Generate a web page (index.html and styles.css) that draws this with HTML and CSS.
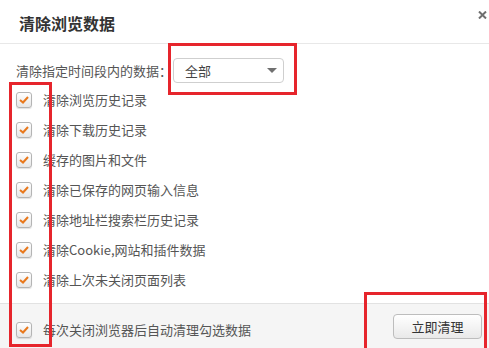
FILE: index.html
```html
<!DOCTYPE html>
<html lang="zh-CN">
<head>
<meta charset="utf-8">
<link rel="stylesheet" href="styles.css">
</head>
<body>
<div class="dialog">
  <div class="header">
    <span class="title">清除浏览数据</span>
    <svg class="close" width="9" height="8" viewBox="0 0 9 8"><path d="M1 0.5 L8 7.5 M8 0.5 L1 7.5" stroke="#6f6f6f" stroke-width="2"/></svg>
  </div>
  <div class="content">
    <div class="range">
      <span class="range-label">清除指定时间段内的数据：</span>
      <div class="select"><span>全部</span><span class="arrow"></span></div>
    </div>
    <ul class="list">
      <li class="item"><span class="cb"><svg width="10" height="8" viewBox="0 0 10 8"><path d="M1 4 L4 6.5 L9 1" fill="none" stroke="#e8781c" stroke-width="2"/></svg></span>清除浏览历史记录</li>
      <li class="item"><span class="cb"><svg width="10" height="8" viewBox="0 0 10 8"><path d="M1 4 L4 6.5 L9 1" fill="none" stroke="#e8781c" stroke-width="2"/></svg></span>清除下载历史记录</li>
      <li class="item"><span class="cb"><svg width="10" height="8" viewBox="0 0 10 8"><path d="M1 4 L4 6.5 L9 1" fill="none" stroke="#e8781c" stroke-width="2"/></svg></span>缓存的图片和文件</li>
      <li class="item"><span class="cb"><svg width="10" height="8" viewBox="0 0 10 8"><path d="M1 4 L4 6.5 L9 1" fill="none" stroke="#e8781c" stroke-width="2"/></svg></span>清除已保存的网页输入信息</li>
      <li class="item"><span class="cb"><svg width="10" height="8" viewBox="0 0 10 8"><path d="M1 4 L4 6.5 L9 1" fill="none" stroke="#e8781c" stroke-width="2"/></svg></span>清除地址栏搜索栏历史记录</li>
      <li class="item"><span class="cb"><svg width="10" height="8" viewBox="0 0 10 8"><path d="M1 4 L4 6.5 L9 1" fill="none" stroke="#e8781c" stroke-width="2"/></svg></span>清除Cookie,网站和插件数据</li>
      <li class="item"><span class="cb"><svg width="10" height="8" viewBox="0 0 10 8"><path d="M1 4 L4 6.5 L9 1" fill="none" stroke="#e8781c" stroke-width="2"/></svg></span>清除上次未关闭页面列表</li>
    </ul>
  </div>
  <div class="footer">
    <div class="item auto"><span class="cb"><svg width="10" height="8" viewBox="0 0 10 8"><path d="M1 4 L4 6.5 L9 1" fill="none" stroke="#e8781c" stroke-width="2"/></svg></span>每次关闭浏览器后自动清理勾选数据</div>
    <button class="btn">立即清理</button>
  </div>
  <div class="mark mark-left"></div>
  <div class="mark mark-select"></div>
  <div class="mark mark-btn"></div>
</div>
</body>
</html>
```
FILE: styles.css
```css
html, body {
  margin: 0;
  padding: 0;
  background: #fff;
}
body {
  font-family: "Noto Sans CJK SC", "Liberation Sans", sans-serif;
  font-size: 13px;
  color: #555;
  overflow: hidden;
}
.dialog {
  position: relative;
  width: 489px;
  height: 348px;
  overflow: hidden;
}
.header {
  height: 43px;
  border-bottom: 1px solid #e8e8e8;
  display: flex;
  align-items: flex-start;
  justify-content: space-between;
  padding: 0 2px 0 19px;
}
.title {
  font-size: 16px;
  font-weight: bold;
  color: #333;
  line-height: 18px;
  margin-top: 14px;
}
.close {
  margin-top: 11px;
}
.content {
  padding: 14px 0 0 16px;
}
.range {
  display: flex;
  align-items: center;
  height: 25px;
}
.range-label {
  width: 157px;
  line-height: 14px;
  margin-top: 1px;
}
.select {
  width: 109px;
  height: 23px;
  border: 1px solid #cfcfcf;
  border-radius: 4px;
  display: flex;
  align-items: center;
  justify-content: space-between;
  padding: 0 6px 0 11px;
  box-sizing: content-box;
  width: 92px;
  color: #444;
}
.arrow {
  width: 0;
  height: 0;
  border-left: 5px solid transparent;
  border-right: 5px solid transparent;
  border-top: 5px solid #707070;
}
.list {
  list-style: none;
  margin: 2px 0 0 0;
  padding: 0;
}
.item {
  display: flex;
  align-items: center;
  height: 30px;
  line-height: 14px;
}
.cb {
  width: 14px;
  height: 14px;
  border: 1px solid #b4b4b4;
  border-radius: 3px;
  background: linear-gradient(#ffffff, #e6e6e6);
  box-shadow: 0 1px 1px rgba(0,0,0,0.12);
  display: flex;
  align-items: center;
  justify-content: center;
  margin-right: 11px;
  flex: none;
}
.footer {
  position: absolute;
  left: 0;
  right: 0;
  bottom: 0;
  height: 34px;
  border-top: 1px solid #e2e2e2;
  background: #f5f5f5;
  padding: 10px 7px 0 16px;
  display: flex;
  justify-content: space-between;
  align-items: flex-start;
}
.auto {
  height: 16px;
  margin-top: 8px;
}
.btn {
  width: 89px;
  height: 25px;
  border: 1px solid #bdbdbd;
  border-radius: 4px;
  background: linear-gradient(#ffffff, #e9e9e9);
  font-family: "Noto Sans CJK SC", sans-serif;
  font-size: 13px;
  color: #333;
  padding: 0;
  line-height: 14px;
}
.mark {
  position: absolute;
  border: 3px solid #e6252c;
  box-sizing: border-box;
}
.mark-left {
  left: 9px;
  top: 82px;
  width: 43px;
  height: 265px;
}
.mark-select {
  left: 168px;
  top: 43px;
  width: 129px;
  height: 52px;
}
.mark-btn {
  left: 364px;
  top: 292px;
  width: 123px;
  height: 70px;
}
```
